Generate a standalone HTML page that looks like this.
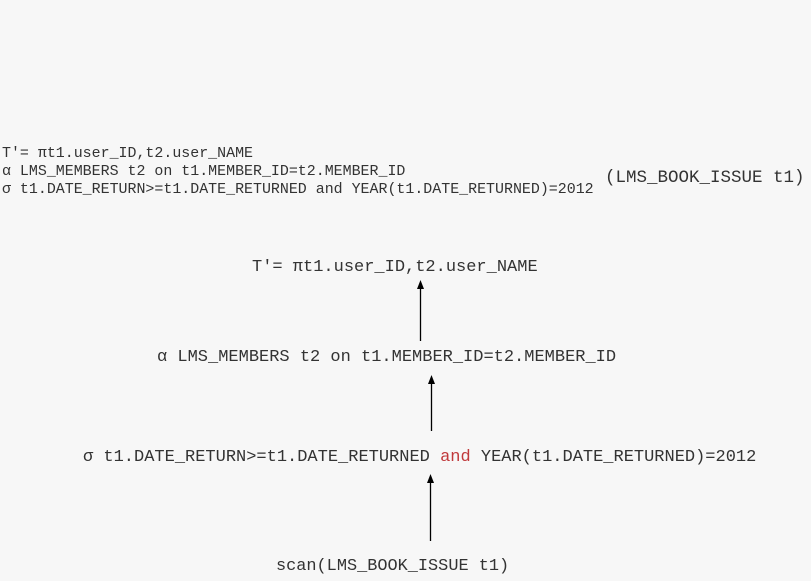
<!DOCTYPE html>
<html><head><meta charset="utf-8"><style>
html,body{margin:0;padding:0;background:#f7f7f7;width:811px;height:581px;overflow:hidden;position:relative}
.t{position:absolute;white-space:pre;font-family:"Liberation Mono","DejaVu Sans Mono",monospace;color:#333;line-height:1}
.s{font-size:14.95px}
.b{font-size:17px}
.r{color:#c0393b}
</style></head><body>
<div class="t s" style="left:2px;top:147px">T'= πt1.user_ID,t2.user_NAME</div>
<div class="t s" style="left:2px;top:165px">α LMS_MEMBERS t2 on t1.MEMBER_ID=t2.MEMBER_ID</div>
<div class="t s" style="left:2px;top:183px">σ t1.DATE_RETURN&gt;=t1.DATE_RETURNED and YEAR(t1.DATE_RETURNED)=2012</div>
<div class="t b" style="left:605px;top:170px;font-size:17.5px">(LMS_BOOK_ISSUE t1)</div>

<div class="t b" style="left:252px;top:259px">T'= πt1.user_ID,t2.user_NAME</div>
<div class="t b" style="left:157px;top:349px">α LMS_MEMBERS t2 on t1.MEMBER_ID=t2.MEMBER_ID</div>
<div class="t b" style="left:83px;top:449px">σ t1.DATE_RETURN&gt;=t1.DATE_RETURNED <span class="r">and</span> YEAR(t1.DATE_RETURNED)=2012</div>
<div class="t b" style="left:276px;top:559px;font-size:16.9px">scan(LMS_BOOK_ISSUE t1)</div>

<svg width="811" height="581" style="position:absolute;left:0;top:0">
<g stroke="#000" stroke-width="1.3">
<line x1="420.5" y1="288" x2="420.5" y2="341"/>
<line x1="431.5" y1="382" x2="431.5" y2="431"/>
<line x1="430.5" y1="482" x2="430.5" y2="541"/>
</g>
<g fill="#000">
<polygon points="420.5,280 417,289 424,289"/>
<polygon points="431.5,375 428,384 435,384"/>
<polygon points="430.5,474 427,483 434,483"/>
</g>
</svg>
</body></html>
